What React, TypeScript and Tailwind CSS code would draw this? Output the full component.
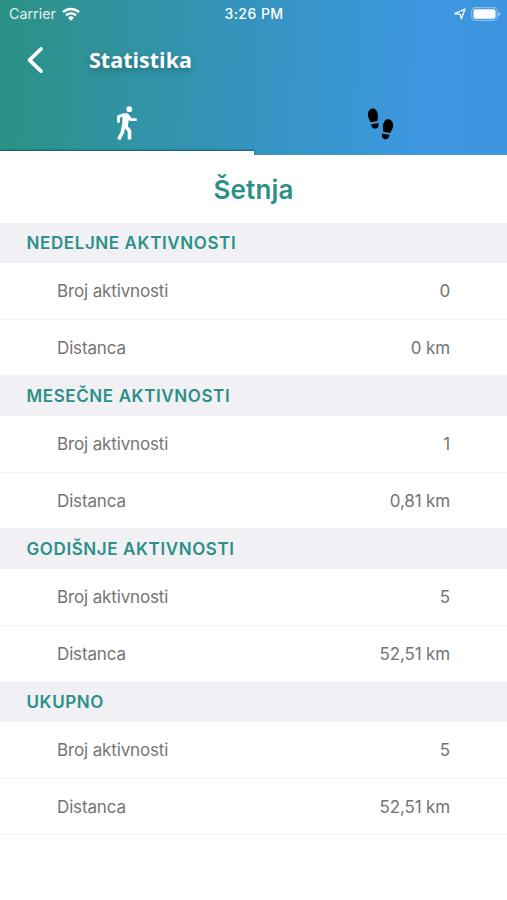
import React from 'react';

interface Activity {
  title: string;
  count: string;
  distance: string;
}

const ACTIVITIES: Activity[] = [
  { title: 'NEDELJNE AKTIVNOSTI', count: '0', distance: '0 km' },
  { title: 'MESEČNE AKTIVNOSTI', count: '1', distance: '0,81 km' },
  { title: 'GODIŠNJE AKTIVNOSTI', count: '5', distance: '52,51 km' },
  { title: 'UKUPNO', count: '5', distance: '52,51 km' },
];

const StatusBar: React.FC = () => (
  <div className="grid h-[27px] grid-cols-3 items-center pl-[9px] pr-[6px] text-white">
    <div className="flex items-center gap-[6px]">
      <span className="text-[14.3px] text-white/85">Carrier</span>
      <svg viewBox="0 0 18 14" className="h-[14px] w-[18px]">
        <path d="M1 5.2a11.4 11.4 0 0 1 16 0" fill="none" stroke="white" strokeWidth="2.5" />
        <path d="M4 8.4a7.1 7.1 0 0 1 10 0" fill="none" stroke="white" strokeWidth="2.4" />
        <path d="M9 13.7 6 10.7a4.3 4.3 0 0 1 6 0Z" fill="white" />
      </svg>
    </div>
    <span className="pr-[2px] text-center text-[14px] font-medium tracking-[0.45px]">3:26 PM</span>
    <div className="flex items-center justify-end gap-[5px]">
      <svg viewBox="0 0 12 12" className="h-[12px] w-[12px]">
        <path d="M.9 5.6 11 1 7.4 10.8 6.3 6.4Z" fill="none" stroke="white" strokeWidth="1.3" strokeLinejoin="round" />
      </svg>
      <svg viewBox="0 0 30 14" className="h-[14px] w-[30px]">
        <rect x=".7" y=".7" width="25.6" height="12.6" rx="3.8" fill="none" stroke="white" strokeOpacity=".4" strokeWidth="1.2" />
        <rect x="2.5" y="2.3" width="22" height="9.4" rx="2" fill="white" />
        <path d="M27.5 4.8q2 1 2 2.2t-2 2.2Z" fill="white" fillOpacity=".5" />
      </svg>
    </div>
  </div>
);

const Walker: React.FC = () => (
  <svg viewBox="0 0 22 34" className="ml-px h-[34px] w-[22px]">
    <circle cx="13.3" cy="3.2" r="2.9" fill="white" />
    <path d="M5.8 7.6 11.4 7.2 13.4 9.5 12.6 15.5 11.6 20.5 6 20.5 6.6 11Z" fill="white" />
    <g fill="none" stroke="white" strokeLinejoin="round">
      <path d="M8 8.9 2.5 10.5v6.2" strokeWidth="2.9" />
      <path d="m11.3 9 3.4 4.6h6" strokeWidth="2.9" />
      <path d="M7.8 19 6.4 26.2 2.7 33.4" strokeWidth="3.6" />
      <path d="m8.9 19.4 4.6 5.6v8.5" strokeWidth="3.6" />
    </g>
  </svg>
);

const Footsteps: React.FC = () => (
  <svg viewBox="0 0 28 34" className="h-[34px] w-[28px]">
    <path d="M6.2 1.6C9 1.1 11.3 4 11.8 7.8c.4 2.8-.2 4.6-.3 6.3L4.6 15.3C4.3 13.6 2.3 12 2 8.5c-.3-3.4 1.6-6.5 4.2-6.9Z" />
    <path d="M5 17.4 12.3 16.1c.9 2.7.1 5-2.2 5.4-2.5.5-4.6-1-5.1-4.1Z" />
    <path d="M22.8 12.3c2.8.5 4.8 3.5 4.4 7-.4 3.1-2.3 4.7-2.9 6.7l-7-1.3c.1-2-.7-3.4-.3-6.3.5-3.8 2.9-6.6 5.8-6.1Z" />
    <path d="m16.2 26.6 7.4 1.3c-.6 3-2.5 4.8-5 4.3-2.4-.5-3.3-2.7-2.4-5.6Z" />
  </svg>
);

const Row: React.FC<{ label: string; value: string; className: string }> = ({ label, value, className }) => (
  <div className={`flex items-center justify-between border-b border-[#f4f4f5] px-[57px] pt-[2px] text-[17px] tracking-[-0.14px] text-[#747474] ${className}`}>
    <span>{label}</span>
    <span>{value}</span>
  </div>
);

const App: React.FC = () => {
  return (
    <div className="min-h-[900px] w-full bg-white font-['Inter',sans-serif]">
      <header className="h-[155px] bg-[linear-gradient(93deg,#2a9287_0%,#2c9289_5%,#3193a5_27%,#3594bf_50%,#3a97d8_74%,#3d96df_82%,#3d95df_100%)]">
        <StatusBar />

        <div className="flex h-[66px] items-center pl-[26px]">
          <svg viewBox="0 0 18 28" className="h-[28px] w-[18px]">
            <path d="M15 3 3.5 14.2 15 25.2" fill="none" stroke="white" strokeWidth="3.7" strokeLinecap="round" strokeLinejoin="round" />
          </svg>
          <h1 className="ml-[45px] pt-[1px] font-['Open_Sans',sans-serif] text-[21.5px] font-bold [text-shadow:0_3px_6px_rgba(0,0,0,0.25)] text-white">
            Statistika
          </h1>
        </div>

        {/* Activity tabs */}
        <div className="grid h-[62px] grid-cols-2">
          <button className="flex flex-col items-center justify-between pt-[13px]">
            <Walker />
            <span className="h-1 w-full bg-white shadow-[0_-1px_2px_rgba(0,50,70,0.6)]" />
          </button>
          <button className="flex justify-center pt-[14px]">
            <Footsteps />
          </button>
        </div>
      </header>

      <h2 className="flex h-[68px] items-center justify-center text-[26px] font-semibold tracking-[0.15px] text-[#2b9086]">
        Šetnja
      </h2>

      {ACTIVITIES.map((activity) => (
        <section key={activity.title}>
          <h3 className="flex h-[40px] items-center bg-[#f0f0f5] pl-[26.5px] pt-[1px] text-[17px] font-semibold tracking-[0.6px] text-[#2b9086]">
            {activity.title}
          </h3>
          <Row label="Broj aktivnosti" value={activity.count} className="h-[57px]" />
          <Row label="Distanca" value={activity.distance} className="h-[56px]" />
        </section>
      ))}
    </div>
  );
};

export default App;
